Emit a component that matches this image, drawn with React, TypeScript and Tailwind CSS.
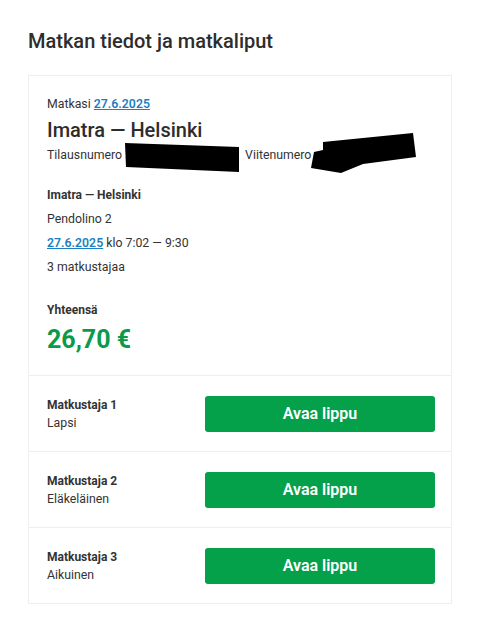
import React from "react";

function Row({ n, type }: { n: number; type: string }) {
  return (
    <div className="flex items-center justify-between border-t border-[#eeeeee] pl-[18px] pr-[16px] h-[76px]">
      <div className="leading-[18px] text-[#333]">
        <div className="font-bold text-[12px]">Matkustaja {n}</div>
        <div className="text-[12.3px]">{type}</div>
      </div>
      <button className="w-[230px] h-[36px] rounded-[3px] bg-[#05a04a] text-white text-[16px] font-semibold">
        Avaa lippu
      </button>
    </div>
  );
}

export default function App() {
  return (
    <div className="bg-white min-h-[619px] px-[28px] pt-[28px] pb-[14px] text-[#333]" style={{ fontFamily: "Roboto, 'Liberation Sans', sans-serif" }}>
      <h1 className="text-[20px] font-medium leading-[26px] text-[#2d2d2d]">Matkan tiedot ja matkaliput</h1>
      <div className="mt-[21px] border border-[#eeeeee]">
        <div className="px-[18px] pt-[19px] pb-[18px]">
          <div className="text-[12.3px] leading-[18px]">
            Matkasi <a className="text-[#1d7fc2] font-semibold underline">27.6.2025</a>
          </div>
          <div className="text-[20px] font-medium leading-[28px] mt-[3px] text-[#2d2d2d]">Imatra — Helsinki</div>
          <div className="text-[12.3px] h-[18px] mt-[2px] flex items-center">
            <span>Tilausnumero</span>
            <svg width="114" height="29" className="ml-[3px] mt-[5px] shrink-0" viewBox="0 0 114 29">
              <polygon points="0,0 114,4 114,29 1,24" fill="#000" />
            </svg>
            <span className="ml-[6px]">Viitenumero</span>
            <svg width="106" height="40" className="-mt-[4px] shrink-0" viewBox="0 0 106 40">
              <polygon points="12,9 102,0 105,24 52,31 30,40 0,35 3,19 12,17" fill="#000" />
            </svg>
          </div>
          <div className="mt-[19px] leading-[24px]">
            <div className="font-bold text-[12px]">Imatra — Helsinki</div>
            <div className="text-[12.3px]">Pendolino 2</div>
            <div className="text-[12.3px]"><a className="text-[#1d7fc2] font-semibold underline">27.6.2025</a> klo 7:02 — 9:30</div>
            <div className="text-[12.3px]">3 matkustajaa</div>
          </div>
          <div className="mt-[22px] text-[12px] leading-[18px] font-bold">Yhteensä</div>
          <div className="mt-[4px] text-[25px] font-bold leading-[34px] text-[#0b9a4a]">26,70 €</div>
        </div>
        <Row n={1} type="Lapsi" />
        <Row n={2} type="Eläkeläinen" />
        <Row n={3} type="Aikuinen" />
      </div>
    </div>
  );
}
